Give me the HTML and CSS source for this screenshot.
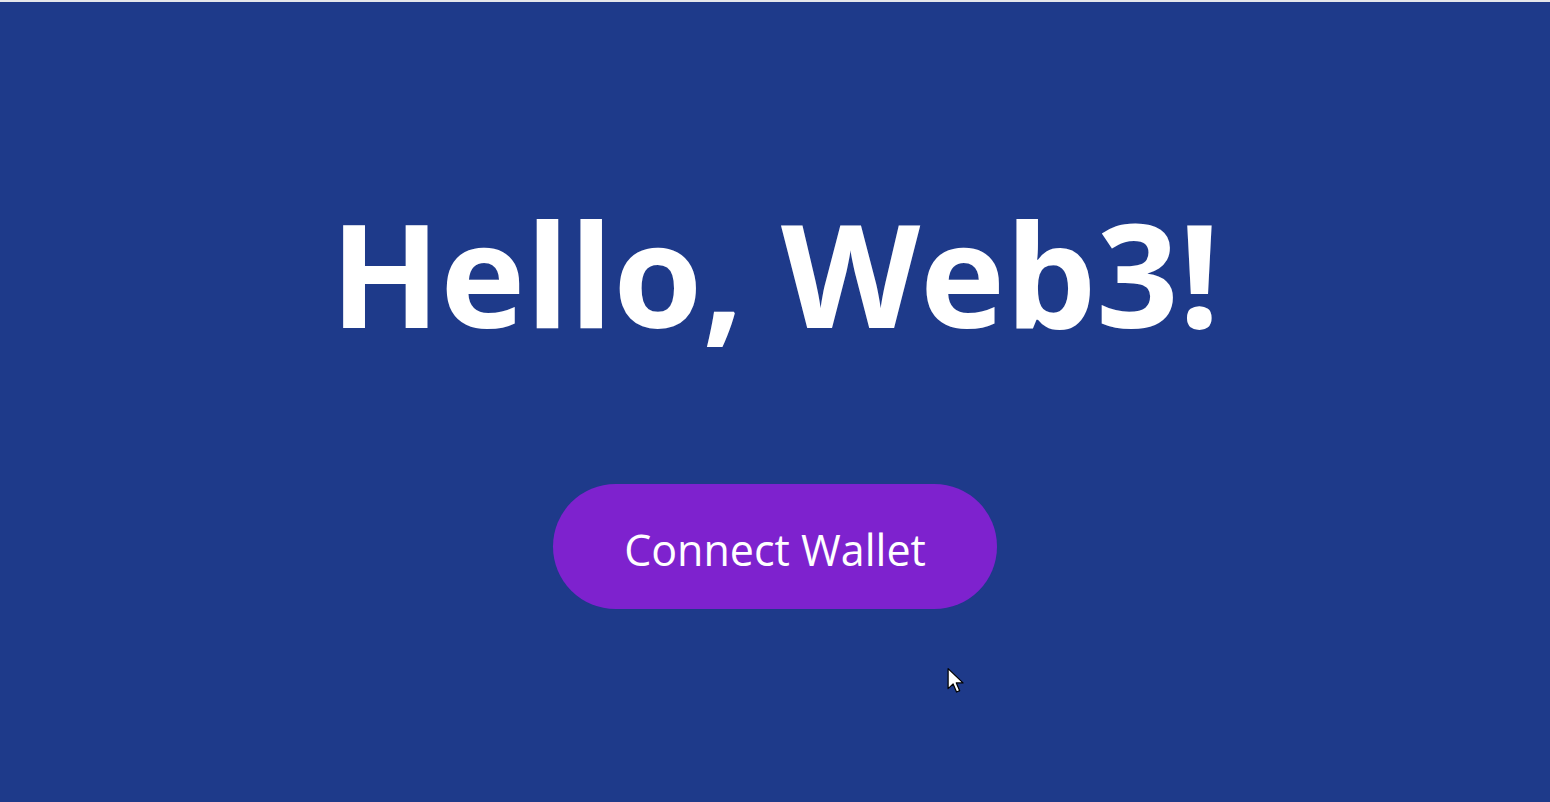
FILE: index.html
```html
<!DOCTYPE html>
<html lang="en">
<head>
<meta charset="utf-8">
<title>Hello, Web3!</title>
<link rel="stylesheet" href="styles.css">
</head>
<body>
<div class="topline"></div>
<main class="app">
  <h1 class="title">Hello, Web3!</h1>
  <button class="connect">Connect Wallet</button>
</main>
<svg class="cursor" width="20" height="30" viewBox="0 0 18 26"><path d="M1 1 L1 19 L5.5 14.8 L8.6 22 L11.4 20.8 L8.4 13.8 L14.4 13.8 Z" fill="#fff" stroke="#000" stroke-width="1.1" stroke-linejoin="round"/></svg>
</body>
</html>
```
FILE: styles.css
```css
html, body {
  margin: 0;
  padding: 0;
  height: 100%;
  background: #1e3a8a;
  overflow: hidden;
}
body {
  display: flex;
  flex-direction: column;
  font-family: "Open Sans", "Noto Sans", sans-serif;
}
.topline {
  height: 2px;
  background: #e5e7eb;
  flex: none;
}
.app {
  flex: 1;
  display: flex;
  flex-direction: column;
  align-items: center;
  padding-top: 198px;
}
.title {
  margin: 0;
  color: #fff;
  font-size: 144px;
  font-weight: 700;
  line-height: 1;
  letter-spacing: 0;
}
.connect {
  margin-top: 140px;
  width: 444px;
  height: 125px;
  border: none;
  border-radius: 63px;
  background: #7e22ce;
  color: #fff;
  font-family: "Open Sans", "Noto Sans", sans-serif;
  font-size: 43px;
  font-weight: 400;
  padding: 6px 0 0;
}
.cursor {
  position: absolute;
  left: 947px;
  top: 667px;
}
```
